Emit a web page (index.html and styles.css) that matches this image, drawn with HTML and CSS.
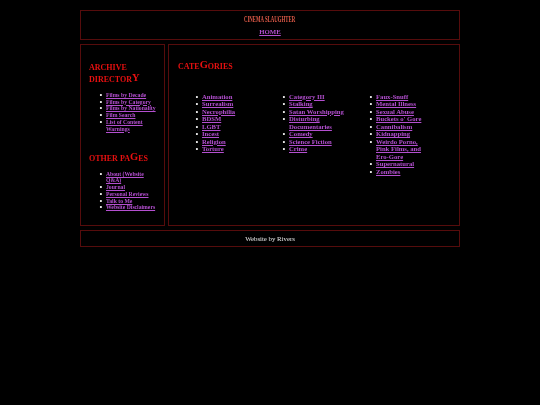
FILE: index.html
```html
<!DOCTYPE html>
<html lang="en">
<head>
<meta charset="utf-8">
<title>Cinema Slaughter</title>
<link rel="stylesheet" href="styles.css">
</head>
<body>
<div class="page">
  <header class="box header">
    <h1 class="site-title">CINEMA SLAUGHTER</h1>
    <a class="home" href="#">HOME</a>
  </header>
  <div class="columns">
    <aside class="box sidebar">
      <h2 class="side-heading first">ARCHIVE DIRECTOR<span class="tall">Y</span></h2>
      <ul class="side-list">
        <li><a href="#">Films by Decade</a></li>
        <li><a href="#">Films by Category</a></li>
        <li><a href="#">Films by Nationality</a></li>
        <li><a href="#">Film Search</a></li>
        <li><a href="#">List of Content Warnings</a></li>
      </ul>
      <h2 class="side-heading second">OTHER PA<span class="tall">G</span>ES</h2>
      <ul class="side-list other">
        <li><a href="#">About (Website Q&amp;A)</a></li>
        <li><a href="#">Journal</a></li>
        <li><a href="#">Personal Reviews</a></li>
        <li><a href="#">Talk to Me</a></li>
        <li><a href="#">Website Disclaimers</a></li>
      </ul>
    </aside>
    <main class="box main">
      <h2 class="main-heading">CATE<span class="tall">G</span>ORIES</h2>
      <div class="cat-grid">
        <ul class="cat-list">
          <li><a href="#">Animation</a></li>
          <li><a href="#">Surrealism</a></li>
          <li><a href="#">Necrophilia</a></li>
          <li><a href="#">BDSM</a></li>
          <li><a href="#">LGBT</a></li>
          <li><a href="#">Incest</a></li>
          <li><a href="#">Religion</a></li>
          <li><a href="#">Torture</a></li>
        </ul>
        <ul class="cat-list">
          <li><a href="#">Category III</a></li>
          <li><a href="#">Stalking</a></li>
          <li><a href="#">Satan Worshipping</a></li>
          <li><a href="#">Disturbing Documentaries</a></li>
          <li><a href="#">Comedy</a></li>
          <li><a href="#">Science Fiction</a></li>
          <li><a href="#">Crime</a></li>
        </ul>
        <ul class="cat-list">
          <li><a href="#">Faux-Snuff</a></li>
          <li><a href="#">Mental Illness</a></li>
          <li><a href="#">Sexual Abuse</a></li>
          <li><a href="#">Buckets o' Gore</a></li>
          <li><a href="#">Cannibalism</a></li>
          <li><a href="#">Kidnapping</a></li>
          <li><a href="#">Weirdo Porno, Pink Films, and Ero-Gore</a></li>
          <li><a href="#">Supernatural</a></li>
          <li><a href="#">Zombies</a></li>
        </ul>
      </div>
    </main>
  </div>
  <footer class="box footer">Website by Rivers</footer>
</div>
</body>
</html>
```
FILE: styles.css
```css
html, body {
  margin: 0;
  padding: 0;
  background: #000;
  min-height: 100%;
}
body {
  height: 405px;
  overflow: hidden;
  font-family: "Liberation Serif", "Times New Roman", serif;
  color: #fff;
}
a {
  color: #b44fd0;
  font-weight: bold;
  text-decoration: underline;
}
ul {
  margin: 0;
  list-style: none;
}
li {
  position: relative;
}
li::before {
  content: "•";
  position: absolute;
  left: -6.5px;
  top: 1px;
  font-size: 8px;
  color: #fff;
}
.page {
  width: 380px;
  margin: 10px auto 0;
  display: flex;
  flex-direction: column;
  gap: 4px;
  filter: blur(0.35px);
}
.box {
  border: 1px solid #560c0c;
  box-sizing: border-box;
}
.header {
  height: 30px;
  display: flex;
  flex-direction: column;
  align-items: center;
  padding-top: 4px;
}
.site-title {
  margin: 0;
  font-size: 8px;
  line-height: 10px;
  font-weight: bold;
  color: #e05a48;
  transform: scaleX(0.6);
  white-space: nowrap;
}
.home {
  font-size: 6.8px;
  line-height: 11px;
  margin-top: 1px;
}
.columns {
  display: flex;
  gap: 3px;
  height: 182px;
}
.sidebar {
  width: 85px;
  padding: 17px 7px 0 8px;
}
.main {
  width: 292px;
  padding: 16px 9px 0;
}
.side-heading, .main-heading {
  margin: 0;
  font-size: 8px;
  font-weight: bold;
  color: #e81010;
  line-height: 11.5px;
}
.side-heading.second {
  margin-top: 21px;
}
.side-heading.first {
  width: 44px;
}
.tall {
  font-size: 10.5px;
  line-height: 8px;
  vertical-align: 1px;
}
.side-list {
  margin-top: 7px;
  padding-left: 17px;
  font-size: 5.7px;
  line-height: 6.7px;
}
.side-list.other {
  margin-top: 6px;
}
.cat-grid {
  display: grid;
  grid-template-columns: repeat(3, 87px);
  margin-top: 20px;
  margin-left: 15px;
}
.cat-list {
  padding-left: 9px;
  padding-right: 22px;
  font-size: 6.67px;
  line-height: 7.55px;
}
.footer {
  height: 17px;
  font-size: 6.8px;
  line-height: 15px;
  text-align: center;
  color: #e8e8e8;
}
```
